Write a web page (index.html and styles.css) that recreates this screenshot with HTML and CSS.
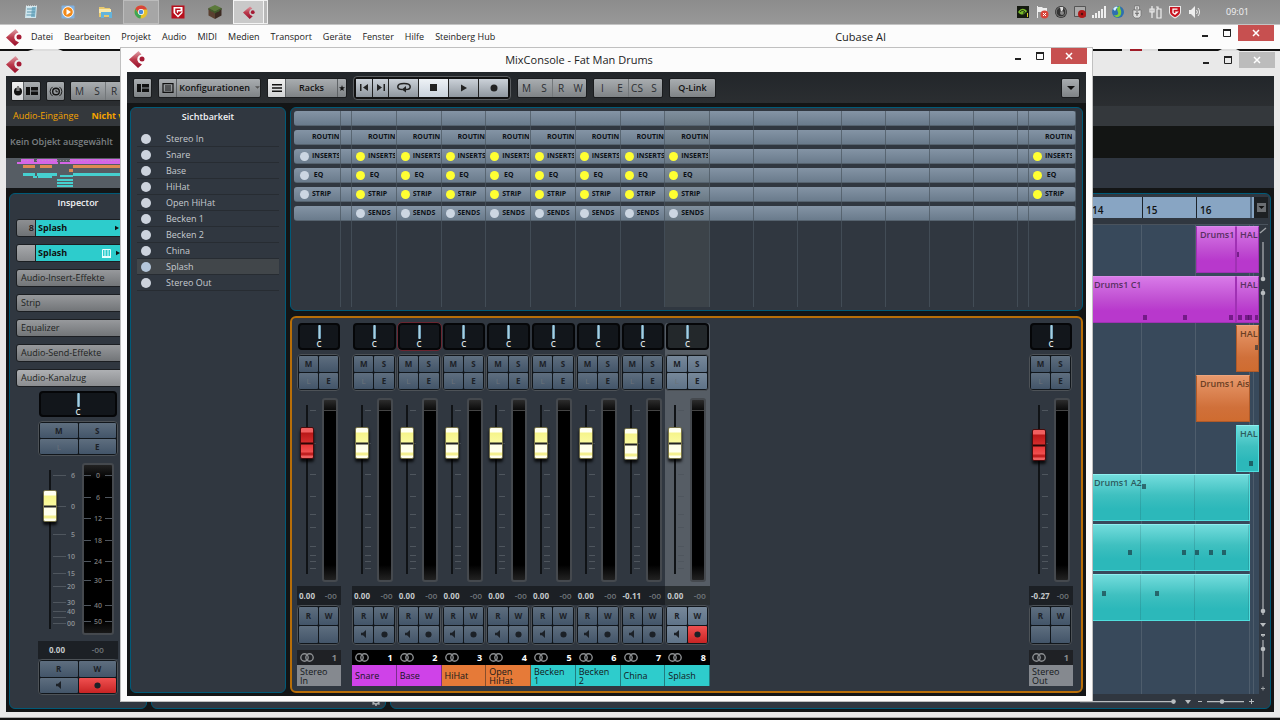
FILE: index.html
```html
<!DOCTYPE html>
<html lang="de">
<head>
<meta charset="utf-8">
<title>Cubase AI</title>
<link rel="stylesheet" href="styles.css">
</head>
<body>
<svg class="defs" aria-hidden="true">
  <defs>
    <linearGradient id="lg" x1="0" y1="0" x2="0" y2="1"><stop offset="0" stop-color="#e0a0a8"/><stop offset=".5" stop-color="#bb3a4c"/><stop offset="1" stop-color="#98102c"/></linearGradient>
    <symbol id="cubase" viewBox="0 0 16 17"><path fill="url(#lg)" d="M9.500 0 12.500 3.500A4.800 4.800 0 0 0 9.500 11.500L13 13.500 9 17 0 8.500Z"/><circle cx="13" cy="8" r="2.500" fill="#a51a34"/></symbol>
    <symbol id="panels" viewBox="0 0 12 8"><path d="M0 0h4v8H0zM5 0h7v3.500H5zM5 4.500h7V8H5z"/></symbol>
    <symbol id="list" viewBox="0 0 12 10"><path fill="none" stroke="currentColor" stroke-width="1.200" d="M1 .6h10v8.800H1zM3 3h6M3 5h6M3 7h6"/></symbol>
    <symbol id="lines" viewBox="0 0 10 8"><path d="M0 0h10v1.500H0zM0 3.200h10v1.500H0zM0 6.400h10v1.500H0z"/></symbol>
    <symbol id="power" viewBox="0 0 10 10"><circle cx="5" cy="5.500" r="4"/><path fill="#eee" d="M3.700 0h2.600v5H3.700z"/><path d="M4.500 0h1v5h-1z"/></symbol>
    <symbol id="clock" viewBox="0 0 14 12"><circle cx="7" cy="6" r="3.600" fill="none" stroke="currentColor" stroke-width="1.500"/><path fill="none" stroke="currentColor" d="M7 4v2.300h2M3.300 1a6 6 0 0 0 0 10M10.700 1a6 6 0 0 1 0 10"/></symbol>
    <symbol id="prev" viewBox="0 0 9 7"><path d="M0 0h1.500v7H0zM8 0v7L3 3.500z"/></symbol>
    <symbol id="next" viewBox="0 0 9 7"><path d="M7.500 0H9v7H7.500zM1 0v7l5-3.500z"/></symbol>
    <symbol id="loop" viewBox="0 0 14 10"><path fill="none" stroke="currentColor" stroke-width="1.500" d="M5.500 7C2 7 .8 5.500.8 4.200.8 2.300 3.500 1 7 1s6.200 1.300 6.200 3.200C13.200 6 11 7 9 7"/><path d="M9 3.500V10L4.800 7z"/></symbol>
    <symbol id="play" viewBox="0 0 7 8"><path d="M0 0v8l7-4z"/></symbol>
    <symbol id="dot" viewBox="0 0 8 8"><circle cx="4" cy="4" r="3.500"/></symbol>
    <symbol id="speaker" viewBox="0 0 6 8"><path d="M0 2.800h2L5 0v8L2 5.200H0z"/></symbol>
    <symbol id="rings" viewBox="0 0 14 9"><g fill="none" stroke="currentColor" stroke-width="1.400"><circle cx="4.500" cy="4.500" r="3.700"/><circle cx="9.500" cy="4.500" r="3.700"/></g></symbol>
    <symbol id="caret" viewBox="0 0 8 4"><path d="M0 0h8L4 4z"/></symbol>
    <symbol id="star" viewBox="0 0 8 8"><path d="M4 0 5 3h3L5.600 4.900 6.500 8 4 6.200 1.500 8l.9-3.100L0 3h3z"/></symbol>
    <symbol id="min" viewBox="0 0 8 8"><path d="M1 6h6v2H1z"/></symbol>
    <symbol id="max" viewBox="0 0 10 8"><path fill="none" stroke="currentColor" d="M1.500 1.500h7v6h-7z"/><path d="M1 0h8v2H1z"/></symbol>
    <symbol id="close" viewBox="0 0 8 8"><path fill="none" stroke="currentColor" stroke-width="1.500" d="M1 1l6 6M7 1 1 7"/></symbol>
    <symbol id="gear" viewBox="0 0 10 10"><circle cx="5" cy="5" r="3" fill="none" stroke="currentColor" stroke-width="1.600"/><path stroke="currentColor" stroke-width="1.500" d="M5 0v2M5 8v2M0 5h2M8 5h2M1.500 1.500l1.400 1.400M7.100 7.100l1.400 1.400M8.500 1.500 7.100 2.900M1.500 8.500l1.400-1.400"/></symbol>
    <symbol id="keys" viewBox="0 0 9 9"><path fill="none" stroke="#e6ffff" d="M.5.5h8v8h-8zM3 0v9M6 0v9"/><path fill="#e6ffff" d="M0 7h9v2H0z"/></symbol>
  </defs>
</svg>

<nav class="taskbar" aria-label="Taskleiste">
  <div class="apps">
    <button class="app" aria-label="Editor"><svg viewBox="0 0 14 14"><path fill="#cfe6ee" d="M2 1h11l-1 12H1z"/><path fill="#7fb6cc" d="M8 2h4l-1 10H7z"/><path stroke="#5f96ad" fill="none" d="M3 4h8M3 7h8M2.500 10h8"/><path stroke="#eee" stroke-dasharray="1 1" d="M2 1h11"/></svg></button>
    <button class="app" aria-label="Media Player"><svg viewBox="0 0 14 14"><rect x=".5" y=".5" width="13" height="13" rx="1" fill="#7fb0e0"/><circle cx="7" cy="7" r="5.300" fill="#f28a1a" stroke="#fff"/><path fill="#fff" d="M5.500 4v6l4.500-3z"/></svg></button>
    <button class="app" aria-label="Explorer"><svg viewBox="0 0 14 14"><path fill="#e8c96e" d="M1 2h5l1 1h5v9H1z"/><path fill="#f9e8ac" d="M1 4h12v4H1z"/><path fill="#64b4dc" d="M3 7h11v6h-3v-3H6v3H3z"/></svg></button>
    <button class="app open" aria-label="Chrome"><svg viewBox="0 0 14 14"><circle cx="7" cy="7" r="6.500" fill="#e8c22a"/><path fill="#d8443a" d="M1.400 3.800A6.500 6.500 0 0 1 13 4.500H7L4.500 8z"/><path fill="#3da556" d="M1.400 3.800 4.500 9 7 9.500 6.500 13.500A6.500 6.500 0 0 1 1.400 3.800z"/><circle cx="7" cy="7" r="3" fill="#fff"/><circle cx="7" cy="7" r="2.300" fill="#4a8ad8"/></svg></button>
    <button class="app" aria-label="G Data"><svg viewBox="0 0 14 14"><path fill="#b80f1c" d="M.5.5h13v13H.5z"/><path fill="#fff" d="M2.500 2h9v6L7 12.500 2.500 8z"/><path fill="none" stroke="#b80f1c" stroke-width="1.500" d="M9.500 4.200H5v3.300l2 2 2.300-2.300H7"/></svg></button>
    <button class="app" aria-label="Minecraft"><svg viewBox="0 0 14 14"><path fill="#5b7a3a" d="M7 0l6.500 3L7 6.500.5 3z"/><path fill="#5a4030" d="M.5 3 7 6.500V14L.5 10.500z"/><path fill="#3c2b22" d="M13.500 3 7 6.500V14l6.500-3.500z"/><path fill="#3f5d2a" d="M.5 3 7 6.500v2L5 6.800 3 6.500 2 5 .5 5zM13.500 3 7 6.500v2l2-1.500 2-.5 1-1.500h1.500z"/></svg></button>
    <button class="app current" aria-label="Cubase"><svg viewBox="0 0 16 17"><use href="#cubase"/></svg></button>
    <span class="stack"></span>
  </div>
  <div class="tray">
    <svg viewBox="0 0 14 14"><path fill="#151a10" d="M1 1h12v12H1z"/><path fill="#76b82a" d="M2 7c3-4 6-4 9-1-2 4-6 5-9 1z"/><path fill="none" stroke="#151a10" d="M4 7c2-2 3-2 5 0M7 8h3"/><path fill="#d8d020" d="M11 8h1v4h-1z"/></svg>
    <svg viewBox="0 0 14 14"><path fill="#eee" d="M2 1h1v12H2zM3 2h4l1 1h4v5H7L6 7H3z"/><circle cx="9.500" cy="9.500" r="4" fill="#d8453a"/><path stroke="#fff" d="M8 8l3 3M11 8l-3 3"/></svg>
    <svg viewBox="0 0 14 14"><circle cx="7" cy="7" r="6" fill="#333"/><circle cx="7" cy="7" r="4.800" fill="none" stroke="#777"/><path fill="#ddd" d="M6 2h3v3L7 7z"/><circle cx="8" cy="8" r="2" fill="#888"/></svg>
    <svg viewBox="0 0 14 14"><path fill="#aaa" stroke="#555" d="M1.500 1.500h11v10h-11z"/><circle cx="9" cy="9" r="4" fill="#b01818"/><circle cx="9" cy="9" r="1.200" fill="#501010"/></svg>
    <svg viewBox="0 0 14 14"><path fill="#eee" d="M0 10h2v3H0zM3 8h2v5H3zM6 6h2v7H6zM9 4h2v9H9zM12 1h2v12h-2z"/></svg>
    <svg viewBox="0 0 14 14"><circle cx="7" cy="7" r="6" fill="#2c6fb0"/><path fill="#7ecb3a" d="M9 1c-4 1-3 4-2 6s-1 4-4 3c1 3 6 3 7-1s-1-4-1-8z"/><path fill="#d6f0ff" d="M2 4c2-3 4-3 5-2-2 1-2 3-3 4z"/></svg>
    <svg viewBox="0 0 14 14"><path fill="#ddd" stroke="#666" stroke-width=".6" d="M4.500 1h5v4h-5zM3 5h8v6l-2 2H5l-2-2z"/><path stroke="#666" fill="none" d="M6 3h2M7 6v5M5 8l2 1 2-1"/></svg>
    <svg viewBox="0 0 14 14"><path fill="none" stroke="#eee" stroke-width="1.200" d="M3 1v12M1 4h4v3H1zM7 2h2v2h3v9H8V4h1"/></svg>
    <svg viewBox="0 0 14 14"><path fill="#e8e8e8" d="M1 1h12v6c0 3-3 5-6 6.500C4 12 1 10 1 7z"/><path fill="#c81420" d="M2 2h10v5c0 2.500-2.500 4-5 5.300C4.500 11 2 9.500 2 7z"/><path fill="none" stroke="#fff" stroke-width="1.300" d="M9.500 4.200H5v3.500l2 1.500 2.200-2H7.200"/></svg>
    <svg viewBox="0 0 14 14"><path fill="#eee" d="M2 5h2l4-4v12L4 9H2z"/><path fill="none" stroke="#eee" d="M9.500 5a3 3 0 0 1 0 4M11 3a6 6 0 0 1 0 8"/></svg>
    <time class="clock">09:01</time>
  </div>
</nav>

<header class="menubar">
  <svg class="logo"><use href="#cubase"/></svg>
  <nav class="menu" aria-label="Hauptmenü">
    <button>Datei</button><button>Bearbeiten</button><button>Projekt</button><button>Audio</button><button>MIDI</button><button>Medien</button><button>Transport</button><button>Geräte</button><button>Fenster</button><button>Hilfe</button><button>Steinberg Hub</button>
  </nav>
  <h1 class="wtitle">Cubase AI</h1>
  <div class="wctl"><button aria-label="Minimieren"><svg><use href="#min"/></svg></button><button aria-label="Maximieren"><svg><use href="#max"/></svg></button><button class="x" aria-label="Schließen"><svg><use href="#close"/></svg></button></div>
</header>

<main class="desk">
  <svg class="sliver" viewBox="0 0 1280 3" preserveAspectRatio="none" aria-hidden="true"><path fill="#111" d="M0 0h1280v3H0z"/><path fill="#ddd" d="M34 0h24l5 2H28zM1122 0h36v2h-36zM1222 0h14l4 2h-22z"/><path fill="#a01c28" d="M1130 0h12v2h-12z"/></svg>

  <section class="window project" aria-label="Projekt">
    <div class="titlebar">
      <svg class="logo"><use href="#cubase"/></svg>
      <div class="wctl"><button aria-label="Minimieren"><svg><use href="#min"/></svg></button><button aria-label="Maximieren"><svg><use href="#max"/></svg></button><button class="x" aria-label="Schließen"><svg><use href="#close"/></svg></button></div>
    </div>
    <div class="client">
      <div class="toolbar">
        <div class="group"><button class="lit w11" aria-label="Aktiv"><svg class="i10"><use href="#power"/></svg></button><button aria-label="Fensterlayout"><svg class="i12"><use href="#panels"/></svg></button></div>
        <div class="group"><button aria-label="Verzögerungsausgleich"><svg class="i14"><use href="#clock"/></svg></button></div>
        <div class="group letters"><button>M</button><button>S</button><button>R</button><button>W</button></div>
      </div>
      <div class="infoline"><span>Audio-Eingänge</span><b>Nicht verbunden</b></div>
      <div class="status">Kein Objekt ausgewählt</div>
      <div class="overview"><svg viewBox="0 0 160 30" aria-hidden="true">
        <path fill="#565d64" d="M0 0h160v30H0z"/>
        <path fill="#d566e6" d="M15 1h13v3H15zM31 1h20v3H31zM11 4h41v2H11zM54 4h12v2H54zM64 1h96v5H64z"/>
        <path fill="#e08a52" d="M17 7h12v3H17zM34 7h12v3H34zM67 7h93v3H67zM63 11h4v3h-4z"/>
        <path fill="#46d0d0" d="M17 15h12v3H17zM31 15h20v3H31zM54 17h13v2H54zM67 15h93v3H67zM27 18h4v2h-4zM32 18h14v2H32zM51 21h16v2H51zM51 24h16v2H51zM51 27h16v2H51z"/>
        <path stroke="#b9aeb9" stroke-width=".6" stroke-dasharray="1 2" d="M15 2.500h145"/>
      </svg></div>
      <div class="workspace">
        <aside class="panel inspector">
          <h2>Inspector</h2>
          <div class="track"><span class="num">8</span><button class="tname"><b>Splash</b><svg class="arrow"><use href="#play"/></svg></button></div>
          <div class="track"><span class="num lightnum"></span><button class="tname"><b>Splash</b><svg class="keys"><use href="#keys"/></svg><svg class="arrow"><use href="#play"/></svg></button></div>
          <button class="section">Audio-Insert-Effekte</button>
          <button class="section">Strip</button>
          <button class="section">Equalizer</button>
          <button class="section">Audio-Send-Effekte</button>
          <button class="section">Audio-Kanalzug</button>
          <div class="strip big" id="inspector-strip"></div>
        </aside>
        <section class="panel tracklist" aria-label="Spurliste"><svg class="gear"><use href="#gear"/></svg></section>
        <section class="panel arrange" aria-label="Arrangement">
          <div class="ruler"><span>14</span><span>15</span><span>16</span><i></i><button aria-label="Lineal"><svg><use href="#caret"/></svg></button></div>
          <div class="field">
            <div class="lanes" id="lanes"></div>
            <svg class="vzoom" viewBox="2 0 10 475" aria-hidden="true"><g stroke="#9da1a5" fill="#b9bdc0"><path d="M3 8l6-5M6 17v435" stroke-width="1.400"/><path stroke="#303740" stroke-width="4" d="M6 55v9M6 390v21"/><path d="M4 410.500h4M4 463.500h4M6 461.500v4"/><path stroke="#303740" stroke-width="5" d="M6 391v18M6 412v3M6 452v9"/><g stroke="none"><circle cx="6" cy="54" r="2.300"/><circle cx="6" cy="68" r="2.300"/><circle cx="6" cy="386" r="2.300"/><path d="M3 398h6l-3 4z"/><path d="M4 409h4v1H4z"/><circle cx="6" cy="424" r="2.300"/></g></g></svg>
          </div>
          <div class="hzoom"><i class="thumb"></i><svg viewBox="0 0 180 12" aria-hidden="true"><g fill="#b9bdc0"><path d="M0 5h93v1.300H0zM127 5h37v1.300h-37zM118 5h4v1h-4zM169 5h5v1h-5zM171 3h1v5h-1zM105 4h6l-3 4z"/><circle cx="93.500" cy="5.600" r="2.300"/><circle cx="142" cy="5.600" r="2.300"/></g></svg></div>
        </section>
      </div>
    </div>
  </section>

  <section class="window mix" aria-label="MixConsole">
    <div class="titlebar">
      <svg class="logo"><use href="#cubase"/></svg>
      <h2 class="wtitle">MixConsole - Fat Man Drums</h2>
      <div class="wctl"><button aria-label="Minimieren"><svg><use href="#min"/></svg></button><button aria-label="Maximieren"><svg><use href="#max"/></svg></button><button class="x" aria-label="Schließen"><svg><use href="#close"/></svg></button></div>
    </div>
    <div class="client">
      <div class="toolbar">
        <div class="group"><button aria-label="Fensterlayout"><svg class="i12"><use href="#panels"/></svg></button></div>
        <div class="group"><button aria-label="Liste"><svg class="i12 tall"><use href="#list"/></svg></button><button class="wide1"><b>Konfigurationen</b><svg class="mini"><use href="#caret"/></svg></button></div>
        <div class="group"><button class="lit" aria-label="Racks anzeigen"><svg class="i10 flat"><use href="#lines"/></svg></button><button class="wide2"><b>Racks</b></button><button class="thin" aria-label="Favorit"><svg class="i6"><use href="#star"/></svg></button></div>
        <div class="group transport"><button class="half" aria-label="Zurück"><svg class="i9"><use href="#prev"/></svg></button><button class="half" aria-label="Vor"><svg class="i9"><use href="#next"/></svg></button><button aria-label="Cycle"><svg class="i14"><use href="#loop"/></svg></button><button class="on" aria-label="Stop"><i class="sq"></i></button><button aria-label="Start"><svg class="i7"><use href="#play"/></svg></button><button aria-label="Aufnahme"><svg class="i8"><use href="#dot"/></svg></button></div>
        <div class="group letters"><button>M</button><button>S</button><button>R</button><button>W</button></div>
        <div class="group letters"><button>I</button><button>E</button><button>CS</button><button>S</button></div>
        <div class="group"><button class="qlink"><b>Q-Link</b></button></div>
        <div class="group end"><button aria-label="Funktionen"><svg class="i8 flat"><use href="#caret"/></svg></button></div>
      </div>
      <div class="mixbody">
        <aside class="panel visibility">
          <h2>Sichtbarkeit</h2>
          <ul id="visibility"></ul>
        </aside>
        <div class="console">
          <section class="panel racks" id="racks" aria-label="Racks"></section>
          <section class="panel faders" id="faders" aria-label="Fader"></section>
        </div>
      </div>
    </div>
  </section>
</main>
<script src="app.js"></script>
</body>
</html>
```

FILE: styles.css
```css
* { box-sizing: border-box; }
body { margin: 0; height: 100vh; min-height: 720px; display: flex; flex-direction: column; overflow: hidden; background: #111; color: #111; font-family: "Open Sans", "Noto Sans", sans-serif; font-size: 9px; line-height: 12px; }
.defs { position: absolute; width: 0; height: 0; }
button { margin: 0; padding: 0; border: 0; background: none; color: inherit; font: inherit; display: flex; align-items: center; justify-content: center; }
h1, h2, ul { margin: 0; padding: 0; list-style: none; }
svg { display: block; fill: currentColor; flex: none; }
b { font-weight: 600; }

/* taskbar */
.taskbar { height: 25px; display: flex; justify-content: space-between; background: linear-gradient(#8c8c8c, #989898); border-bottom: 1px solid #c4c4c4; }
.apps { display: flex; padding-left: 12px; }
.app { width: 37px; height: 24px; }
.app svg { width: 14px; height: 14px; }
.app.open { width: 36px; background: #a6a6a6; border: 1px solid #bcbcbc; }
.app.current { width: 31px; background: #c9c9c9; border: 1px solid #f4f4f4; }
.app.current svg { width: 12px; height: 13px; }
.stack { width: 4px; background: #b8b8b8; border: solid #eee; border-width: 1px 1px 1px 0; }
.tray { display: flex; align-items: center; gap: 5px; padding-right: 31px; }
.tray svg { width: 14px; height: 14px; }
.clock { margin-left: 20px; color: #f4f4f4; }

/* window chrome */
.menubar, .titlebar { height: 24px; display: flex; align-items: center; background: #fcfcfc; position: relative; flex: none; }
.logo { width: 16px; height: 17px; margin-left: 6px; }
.menu { display: flex; gap: 11px; padding-left: 9px; font-size: 9px; color: #222; }
.wtitle { font-weight: 400; font-size: 11px; line-height: 16px; color: #222; }
.menubar .wtitle { margin-left: auto; margin-right: 394px; }
.wctl { position: absolute; right: 6px; top: 0; display: flex; color: #222; }
.wctl button { width: 22px; height: 16px; }
.wctl svg { width: 10px; height: 8px; }
.wctl .x { width: 36px; background: #c75050; color: #fff; }
.desk { position: relative; flex: 1; display: flex; background: #111; }
.sliver { position: absolute; left: 0; top: 0; width: 100%; height: 3px; }
.window { position: absolute; display: flex; flex-direction: column; }
.client { flex: 1; display: flex; flex-direction: column; background: #131516; min-height: 0; }
.project { left: 0; right: 0; top: 2px; bottom: 2px; background: #e9e9e9; padding: 1px 6px 5px; border-bottom: 1px solid #aaa; }
.project .titlebar { background: #e9e9e9; margin: 0 -6px; }
.project .wctl { right: 5px; }
.project .x { background: #bcbcbc; }
.mix { left: 120px; right: 187px; top: -2px; bottom: 18px; background: #fcfcfc; border: 1px solid #c0c0c0; padding: 0 6px 5px; }
.mix .titlebar { margin: 0 -6px; padding-right: 55px; justify-content: center; }
.mix .titlebar .wtitle { color: #222; }
.mix .titlebar .logo { position: absolute; left: 2px; top: 3px; }
.mix .wctl { right: 5px; }

/* toolbars */
.toolbar { height: 31px; flex: none; display: flex; align-items: center; gap: 6px; padding: 0 6px; background: linear-gradient(#22262a, #2b2e31); }
.project .toolbar { padding: 0 5px; gap: 5px; height: 30px; }
.group { display: flex; height: 20px; border: 1px solid #1a1c1e; border-radius: 2px; background: linear-gradient(#a9adb0, #7f8386); overflow: hidden; }
.group button { width: 17px; color: #111; }
.group button + button { border-left: 1px solid #5e6265; }
.group .lit { background: linear-gradient(#f0f0f0, #d0d2d4); }
.group .w11 { width: 11px; }
.letters button { color: #2b2e31; font-size: 10px; }
.group.letters button + button { border-left-color: transparent; }
.group.letters button:nth-child(3) { border-left-color: #74787b; }
.group .wide1 { width: 84px; gap: 5px; padding-left: 2px; }
.mini { width: 5px; height: 3px; color: #555; }
.group .wide2 { width: 52px; }
.group .thin { width: 9px; }
.group .qlink { width: 45px; }
.end { margin-left: auto; }
.transport { height: 24px; padding: 2px; background: #111; border: 1px solid #5b5e61; border-radius: 4px; }
.transport button { width: 30px; background: linear-gradient(#cbd1d8, #8f979f); color: #222; }
.group.transport button + button { border-left-color: #222; width: 30px; }
.group.transport .half, .group.transport .half + .half { width: 16px; }
.transport .on { background: linear-gradient(#eef2f6, #c9d2dc); }
.sq { width: 7px; height: 7px; background: #222; }
.i6 { width: 6px; height: 6px; } .i7 { width: 6px; height: 8px; } .i8 { width: 8px; height: 8px; } .i9 { width: 9px; height: 7px; }
.i10 { width: 10px; height: 10px; } .i12 { width: 12px; height: 8px; } .i14 { width: 14px; height: 11px; }
.tall { height: 10px; } .i10.flat { height: 8px; } .i8.flat { height: 4px; }

/* panels */
.panel { background: #303740; border: 1px solid #005a78; border-radius: 6px; }
.panel h2 { color: #f0f2f4; font-size: 9px; line-height: 16px; font-weight: 600; text-align: center; }

/* project window */
.infoline { height: 20px; display: flex; gap: 13px; align-items: center; padding-left: 7px; background: #34383c; color: #f5a300; white-space: nowrap; }
.infoline b { font-weight: 700; }
.status { height: 32px; line-height: 32px; padding-left: 4px; background: #131514; color: #7c8083; font-weight: 600; }
.overview { height: 30px; background: #2f3640; }
.overview svg { width: 160px; height: 30px; }
.workspace { flex: 1; display: flex; gap: 4px; padding: 5px 3px 3px; min-height: 0; }
.inspector { width: 138px; padding: 1px 6px; display: flex; flex-direction: column; gap: 7px; overflow: hidden; }
.inspector h2 { margin-bottom: 1px; }
.inspector > * { flex: none; }
.track { height: 18px; display: flex; border: 1px solid #1b1e22; border-radius: 3px; overflow: hidden; font-size: 9px; }
.num { width: 19px; text-align: right; padding: 2px 1px 0 0; background: linear-gradient(#8d8f92, #6f7275); border-right: 1px solid #222; font-weight: 600; }
.lightnum { background: linear-gradient(#a6a8ab, #87898c); }
.tname { flex: 1; background: #2dcccc; justify-content: flex-start; padding: 0 2px 0 2px; }
.tname b { margin-right: 48px; font-weight: 700; }
.arrow { width: 4px; height: 6px; }
.tname .keys { width: 9px; height: 9px; margin: 0 5px 0 -13px; }
.section { height: 18px; justify-content: flex-start; padding-left: 4px; border: 1px solid #1b1e22; border-radius: 3px; background: linear-gradient(#97999c, #727578); color: #1d1f21; text-align: left; }
.section:last-of-type { background: linear-gradient(#aeb0b3, #8b8d90); }
.tracklist { width: 235px; display: flex; align-items: flex-end; justify-content: flex-end; padding: 0 4px 2px; }
.gear { width: 10px; height: 10px; color: #aeb2b5; }
.arrange { flex: 1; display: flex; flex-direction: column; padding: 3px 2px 0 0; }
.ruler { height: 21px; display: flex; justify-content: flex-end; background: #88a5c3; margin-bottom: 6px; }
.ruler span { width: 54px; padding: 7px 0 0 3px; border-left: 1px solid #1c232b; font-weight: 600; font-size: 10px; }
.ruler i { width: 4px; border-left: 2px solid #536a82; }
.ruler button { width: 14px; background: #1d2023; color: #111; }
.ruler svg { width: 9px; height: 9px; padding: 3px 1px; background: #6b6e72; }
.field { flex: 1; display: flex; min-height: 0; border-top: 1px solid #4a535d; }
.lanes { flex: 1; position: relative; overflow: hidden; background: repeating-linear-gradient(to left, #4e5d6c 0 1px, transparent 1px 54px) -9px 0, #38495b; }
.lane { height: 47px; margin: 1px 0 3px; position: relative; }
.lane:nth-child(3n + 2) { margin-bottom: 2px; }
.event { position: absolute; top: 0; bottom: 0; padding: 2px 0 0 3px; overflow: hidden; white-space: nowrap; font-weight: 600; border: 1px solid; }
.event.violet { background: linear-gradient(#d87ae8, #c04fd2 50%, #b838cc 75%); border-color: #dc8aea #a031b4 #a031b4; color: #57305f; }
.event.orange { background: linear-gradient(#e8996c, #d0703a 70%, #cf6c30); border-color: #eda47c #b05a28 #b05a28; color: #6b3f24; }
.event.teal { background: linear-gradient(#72dcdc, #3fc0c0 45%, #2cb8ba 75%); border-color: #8ff0f0 #4fdede #4fdede; color: #2c5c5e; }
.event i { position: absolute; width: 4px; height: 5px; background: rgba(20, 40, 50, .6); }
.event.violet i { background: rgba(80, 10, 100, .65); }
.event::after { content: ""; position: absolute; inset: 0; background: repeating-linear-gradient(to left, rgba(30, 50, 60, .16) 0 1px, transparent 1px 54px); }
.event.edge::after { display: none; }
.vzoom { width: 10px; height: 475px; margin-right: -1px; }
.hzoom { height: 14px; display: flex; justify-content: space-between; align-items: flex-end; }
.hzoom svg { width: 180px; height: 12px; margin-right: 8px; }
.thumb { width: 44px; height: 4px; margin: 0 0 6px 12px; background: #9a9ea2; border-radius: 2px; }

/* mixer */
.mixbody { flex: 1; display: flex; gap: 4px; padding: 4px 3px 3px; min-height: 0; }
.visibility { width: 156px; padding: 1px 6px; }
.visibility h2 { margin-bottom: 6px; }
.visibility label { display: flex; align-items: center; height: 16px; padding-left: 4px; gap: 15px; border-bottom: 1px solid #272c32; color: #c6cbd0; }
.visibility .sel { background: #41464a; }
input[type=checkbox] { appearance: none; width: 10px; height: 10px; margin: 0; border-radius: 50%; background: #cdd3dd; flex: none; }
.visibility .sel input { background: #b4c6da; }
.console { flex: 1; display: flex; flex-direction: column; gap: 5px; min-width: 0; }
.racks { flex: 1; display: flex; padding: 3px 6px 3px 3px; }
.inputs { width: 47px; } .gap { width: 11px; } .outputs { width: 47px; }
.channels { width: 358px; display: grid; grid-template-columns: repeat(8, minmax(0, 1fr)); }
.rest { flex: 1; display: grid; grid-template-columns: repeat(7, minmax(0, 1fr)); }
.col { position: relative; display: flex; flex-direction: column; gap: 4px; height: 100%; }
.col::after { content: ""; position: absolute; right: 0; top: 0; bottom: 0; width: 1px; background: rgba(74, 85, 96, .7); }
.col.sel { background: #3c4349; }
.cell { height: 15px; display: flex; align-items: center; padding-left: 4px; overflow: hidden; background: linear-gradient(#8494a5, #6a7b8c); border-bottom: 1px solid #56636f; color: #0c1015; font-size: 7px; font-weight: 700; line-height: 10px; }
.inputs .cell { padding-left: 6px; }
.sel .cell { background: linear-gradient(#808f9d, #6a7985); }
.cell input[type=checkbox] { width: 9px; height: 9px; background: #ccd6e2; }
.cell input[type=checkbox]:checked { background: #ffff32; }
.cell span { width: 27px; overflow: hidden; white-space: nowrap; }
.cell span:only-child { margin-left: 12px; }
.cell label { display: flex; align-items: center; gap: 3px; }
.inputs .cell { border-radius: 3px 0 0 3px; }
.outputs .cell { border-radius: 0 3px 3px 0; }

.faders { flex: none; border: 2px solid #b86e08; padding: 5px; display: flex; }
.faders .outer { width: 44px; }
.faders .channels { margin-left: 11px; }
.faders .outer:last-child { margin: 0 3px 0 auto; }
.strip { display: flex; flex-direction: column; color: #15191e; }
.strip.sel { background: linear-gradient(#565d65 0 264px, #303740 264px); border-radius: 3px; }
.pan { height: 27px; margin: 0 1px; background: #12161b; border: 2px solid #050608; border-radius: 4px; display: flex; flex-direction: column; align-items: center; }
.strip.sel .pan { background: #23282b; }
.pan.armed { outline: 1px solid #6a2530; }
.pan input { appearance: none; background: none; width: 100%; height: 14px; margin: 0; flex: none; }
.pan input::-webkit-slider-thumb { appearance: none; width: 3px; height: 14px; border-radius: 1px; background: linear-gradient(90deg, #4f7d96, #a8cfe0, #5b8ba5); }
.pan output { color: #dfe3e6; font-size: 8px; line-height: 9px; font-weight: 600; }
.quad { display: grid; grid-template-columns: 1fr 1fr; grid-template-rows: 1fr 1fr; gap: 1px; height: 37px; padding: 1px; margin: 4px 1px 7px 0; background: #11161b; border: 1px solid #4d5257; border-radius: 4px; font-size: 8px; line-height: 10px; font-weight: 700; }
.quad button { background: linear-gradient(#5e6e7f, #435569); border-radius: 1px; min-height: 0; color: #1c2127; }
.strip.sel .quad button { background: linear-gradient(#77889a, #5f7388); }
.strip .quad .dim { color: #6c737a; font-weight: 400; }
.quad svg { width: 6px; height: 8px; }
.quad .rec svg { width: 7px; height: 7px; }
.strip .quad button.armed { background: linear-gradient(#f05050, #c82424); }
.faderbox { height: 184px; display: grid; grid-template-columns: 10px 12px 16px; padding-left: 3px; }
.fader { appearance: none; writing-mode: vertical-lr; direction: rtl; width: 14px; height: 169px; margin: 7px 0 0; z-index: 1; background: linear-gradient(90deg, transparent 6px, #101316 6px 8px, transparent 8px); }
.fader::-webkit-slider-thumb { appearance: none; width: 14px; height: 32px; border-radius: 2px; border: 1px solid #77734a; box-shadow: 0 3px 3px rgba(0, 0, 0, .8); background: linear-gradient(#fffff0 0 4px, #f6f48a 5px, #fafa9e 14px, #222 15px 16px, #ffffe8 17px, #fffff0 24px, #f4f090 25px 27px, #fffff0 28px); }
.fader.red::-webkit-slider-thumb { border-color: #4a0c0c; background: linear-gradient(#f06060 0 4px, #b81818 5px, #d42c2c 14px, #2a0505 15px 16px, #e83838 17px, #f05050 24px, #c02020 25px 27px, #ee6060 28px); }
.scale { width: 12px; height: 184px; }
.scale path, .meter path { stroke: #4f565e; fill: none; }
.meter { width: 16px; height: 184px; border: 2px solid #45494e; border-radius: 3px; background: linear-gradient(#2c2c2c, #0a0a0a 10px, #444 10px 11px, #000 11px 165px, #222); }
.vals { display: flex; justify-content: space-between; align-items: center; height: 19px; margin-top: 4px; padding: 0 4px 0 2px; background: #1c2025; color: #c4c8ca; font-size: 8px; font-weight: 700; white-space: nowrap; }
.vals span + span { color: #70757a; font-weight: 600; }
.sel .vals { background: #2b3033; }
.vals + .quad { margin: 0 1px 5px 0; height: 40px; }
.chan { height: 15px; display: flex; align-items: center; justify-content: space-between; padding: 0 4px 0 3px; background: #000; color: #fff; font-weight: 700; font-size: 9px; line-height: 12px; }
.chan svg { width: 14px; height: 9px; color: #8b8e91; }
.name { height: 21px; display: flex; align-items: center; padding: 0 4px 0 3px; font-size: 9px; line-height: 9px; color: #14171a; border-right: 1px solid rgba(20, 25, 30, .45); }
.name.gray { background: #85898f; }
.name.violet { background: #cf42e8; }
.name.orange { background: #e67a38; }
.name.teal { background: #2ecccc; }
.outer .chan { background: #1f2125; color: #888b8e; }
.outer .name { border-right: 0; }

/* channel strip inside the inspector */
.big { width: 80px; margin: -3px 0 0 22px; }
.big .pan { height: 26px; }
.big .quad { height: 35px; margin: 4px 0 7px; }
.big .vals + .quad { height: 36px; margin: 0; }
.big .faderbox { height: 172px; grid-template-columns: 11px 29px 32px; padding-left: 4px; }
.big .fader { width: 16px; height: 159px; background: linear-gradient(90deg, transparent 7px, #101316 7px 9px, transparent 9px); }
.big .scale { width: 24px; height: 172px; }
.big .meter { width: 32px; height: 172px; background: linear-gradient(#222, #000 14px 155px, #181818); }
.big text { fill: #8b9095; font-size: 7px; font-weight: 600; }
.big .meter text { fill: #777; }
.big .vals { height: 18px; margin-top: 6px; padding: 0 14px 0 11px; }
```

FILE: app.js
```js
const channels = [
  { name: 'Snare', color: 'violet' },
  { name: 'Base', color: 'violet', armedPan: true },
  { name: 'HiHat', color: 'orange' },
  { name: 'Open HiHat', color: 'orange' },
  { name: 'Becken 1', color: 'teal' },
  { name: 'Becken 2', color: 'teal' },
  { name: 'China', color: 'teal', vol: '-0.11', pos: 114 },
  { name: 'Splash', color: 'teal', sel: true, rec: true }
];
channels.forEach((c, i) => { c.no = i + 1; });
const stereoIn = { name: 'Stereo In', no: 1, color: 'gray', bus: true, mono: true };
const stereoOut = { name: 'Stereo Out', no: 1, color: 'gray', bus: true, vol: '-0.27', pos: 113 };

const icon = id => `<svg><use href="#${id}"/></svg>`;
const el = id => document.getElementById(id);

/* visibility list */
el('visibility').innerHTML = [stereoIn, ...channels, stereoOut].map(c =>
  `<li><label class="${c.sel ? 'sel' : ''}"><input type="checkbox" checked><span>${c.name}</span></label></li>`).join('');

/* racks */
function rack(kind, sel) {
  const lamp = (label, on) => `<div class="cell"><label><input type="checkbox" ${on ? 'checked' : ''}><span>${label}</span></label></div>`;
  const blank = '<div class="cell"></div>';
  let cells = blank.repeat(6);
  if (kind) {
    const on = kind !== 'in';
    cells = blank + '<div class="cell"><span>ROUTING</span></div>' + lamp('INSERTS', on) + lamp('&nbsp;EQ', on) + lamp('STRIP', on)
      + (kind === 'ch' ? lamp('SENDS', false) : blank);
  }
  return `<div class="col ${sel ? 'sel' : ''}">${cells}</div>`;
}
el('racks').innerHTML =
  `<div class="inputs">${rack('in')}</div><div class="gap">${rack()}</div>` +
  `<div class="channels">${channels.map(c => rack('ch', c.sel)).join('')}</div>` +
  `<div class="rest">${rack().repeat(7)}</div><div class="gap">${rack()}</div>` +
  `<div class="outputs">${rack('out')}</div>`;

/* strips */
const ticks = [12, 45, 76, 98, 116, 129, 148, 157, 163, 170];
const smallScale = `<svg class="scale" viewBox="0 0 12 184"><path d="${ticks.map(y => `M0 ${y}.5h6`).join('')}"/></svg>`;
const bigTicks = [[12, '6'], [43, '0'], [71, '5'], [93, '10'], [110, '15'], [123, '20'], [139, '30'], [148, '40'], [154, ''], [160, '00']];
const bigScale = `<svg class="scale" viewBox="0 0 24 172"><path d="${bigTicks.map(t => `M0 ${t[0]}.5h13`).join('')}"/>` +
  bigTicks.map(t => `<text x="22" y="${t[0] + 3}" text-anchor="end">${t[1]}</text>`).join('') + '</svg>';
const meterMarks = [[12, 0], [34, 6], [55, 12], [77, 18], [98, 24], [117, 30], [142, 40], [158, 50]];
const bigMeter = `<svg class="meter" viewBox="2 2 28 168">${meterMarks.map(m =>
  `<path d="M2 ${m[0]}.5h7M23 ${m[0]}.5h7"/><text x="16" y="${m[0] + 3}" text-anchor="middle">${m[1]}</text>`).join('')}</svg>`;

function strip(c, big) {
  const max = big ? 127 : 137;
  const pos = c.pos || (big ? 107 : 115);
  return `<div class="pan ${c.armedPan ? 'armed' : ''}"><input type="range" aria-label="Panorama ${c.name}"><output>C</output></div>
    <div class="quad"><button>M</button><button>${c.mono ? '' : 'S'}</button><button class="dim">L</button><button>E</button></div>
    <div class="faderbox"><input class="fader ${c.bus ? 'red' : ''}" type="range" min="0" max="${max}" value="${pos}" aria-label="Lautstärke ${c.name}">
    ${big ? bigScale + bigMeter : smallScale + '<div class="meter"></div>'}</div>
    <div class="vals"><span>${c.vol || '0.00'}</span><span>-oo</span></div>
    <div class="quad"><button>R</button><button>W</button><button aria-label="Monitor">${c.bus ? '' : icon('speaker')}</button><button class="rec ${c.rec ? 'armed' : ''}" aria-label="Aufnahme">${c.bus ? '' : icon('dot')}</button></div>
    ${big ? '' : `<div class="chan">${icon('rings')}<span>${c.no}</span></div><div class="name ${c.color}">${c.name}</div>`}`;
}
el('faders').innerHTML =
  `<div class="strip outer">${strip(stereoIn)}</div>` +
  `<div class="channels">${channels.map(c => `<div class="strip ${c.sel ? 'sel' : ''}">${strip(c)}</div>`).join('')}</div>` +
  `<div class="strip outer">${strip(stereoOut)}</div>`;
el('inspector-strip').innerHTML = strip(channels[7], true);

/* arrangement: r = distance from the right edge, w = width, n = notes as [right, top] */
const lanes = [
  [{ t: 'Drums1 H1', c: 'violet', r: 23, w: 40 }, { t: 'HALion', c: 'violet', r: 0, w: 23, n: [[19, 25]] }],
  [{ t: 'Drums1 C1', c: 'violet', r: 23, w: 146, n: [[88, 38], [48, 38], [2, 38]] }, { t: 'HALion', c: 'violet', r: 0, w: 23, n: [[16, 38], [9, 38], [6, 38], [-1, 38]] }],
  [{ t: 'HALion', c: 'orange', r: 0, w: 23, n: [[-1, 19]] }],
  [{ t: 'Drums1 Ais1', c: 'orange', r: 9, w: 54 }],
  [{ t: 'HALion', c: 'teal', r: 0, w: 23, n: [[5, 35]] }],
  [{ t: 'Drums1 A2', c: 'teal', r: 9, w: 160, n: [[103, 9]] }],
  [{ t: '', c: 'teal', r: 9, w: 160, n: [[117, 25], [63, 25], [50, 25], [36, 25], [23, 25]] }],
  [{ t: '', c: 'teal', r: 9, w: 160, n: [[143, 16], [90, 16]] }]
];
el('lanes').innerHTML = lanes.map(l => `<div class="lane">${l.map(e =>
  `<div class="event ${e.c} ${e.r === 9 && e.w > 54 ? '' : 'edge'}" style="right:${e.r}px;width:${e.w}px">${e.t}${(e.n || []).map(n => `<i style="right:${n[0]}px;top:${n[1]}px"></i>`).join('')}</div>`).join('')}</div>`).join('');
```
